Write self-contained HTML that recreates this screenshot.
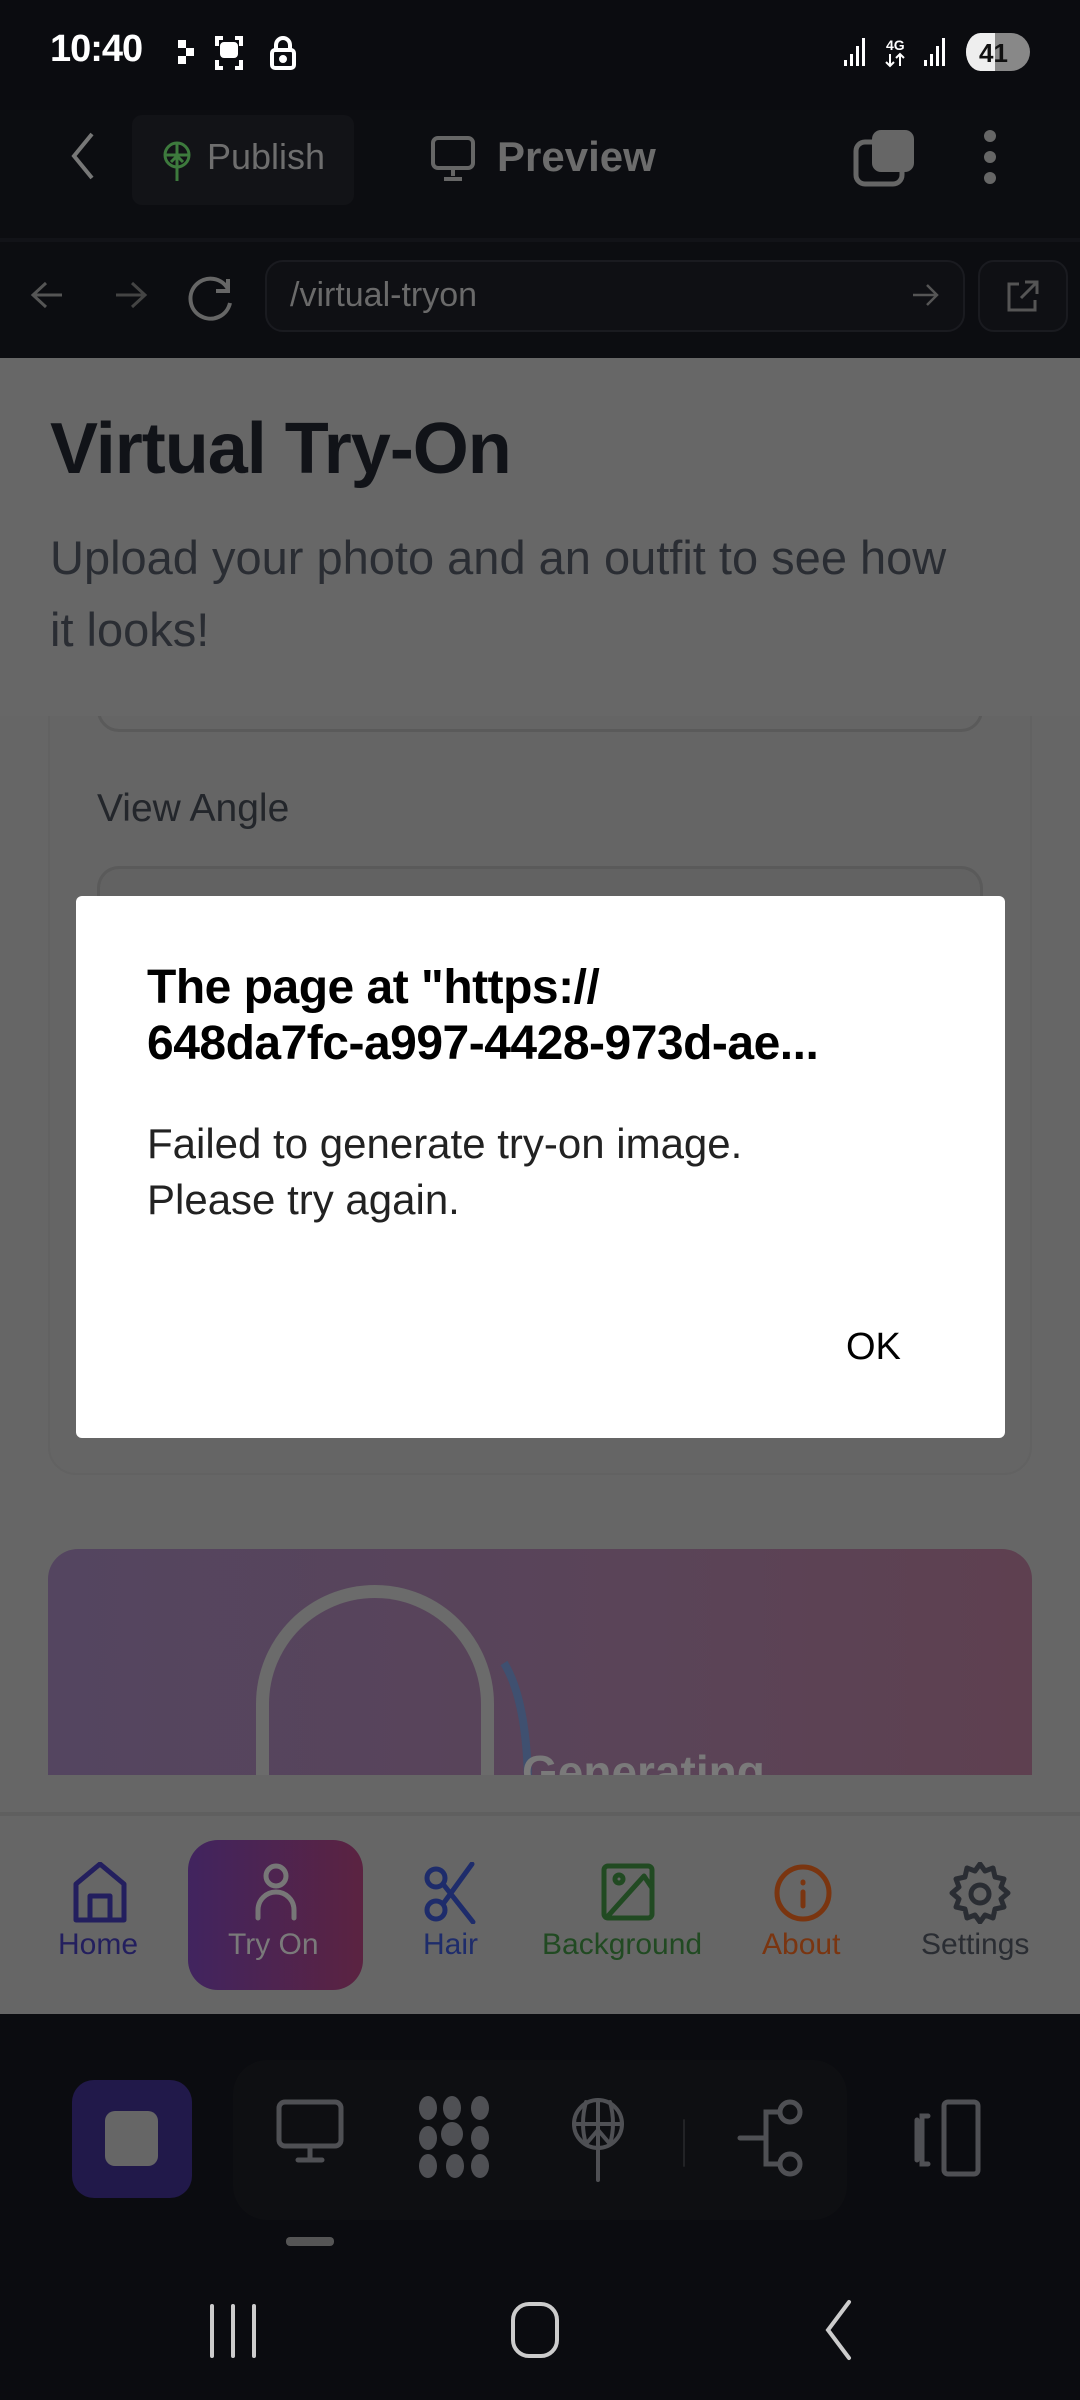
<!DOCTYPE html>
<html><head><meta charset="utf-8"><style>
*{margin:0;padding:0;box-sizing:border-box}
body{width:1080px;height:2400px;overflow:hidden;background:#0b0c10;font-family:"Liberation Sans",sans-serif;position:relative}
.a{position:absolute}
</style></head><body>
<!-- status bar -->
<div class="a" style="left:50px;top:28px;color:#fff;font-size:38px;font-weight:bold;letter-spacing:-1px">10:40</div>
<svg class="a" style="left:175px;top:30px" width="140" height="44" viewBox="0 0 140 44" fill="none" stroke="#fff" stroke-width="4">
<rect x="3" y="10" width="8" height="8" fill="#fff" stroke="none"/><rect x="11" y="18" width="8" height="8" fill="#fff" stroke="none"/><rect x="3" y="26" width="8" height="8" fill="#fff" stroke="none"/>
<path d="M48 8h-6v8M60 8h6v8M48 38h-6v-8M60 38h6v-8"/><rect x="47" y="14" width="14" height="12" rx="2" fill="#fff"/>
<rect x="97" y="20" width="22" height="18" rx="3"/><path d="M101 20v-5a7 7 0 0 1 14 0v5"/><circle cx="108" cy="29" r="2" fill="#fff"/></svg>
<svg class="a" style="left:840px;top:30px" width="200" height="44" viewBox="0 0 200 44" fill="#fff">
<rect x="4" y="30" width="3" height="6"/><rect x="10" y="24" width="3" height="12"/><rect x="16" y="16" width="3" height="20"/><rect x="22" y="8" width="3" height="28"/>
<text x="46" y="20" font-size="14" font-weight="bold" font-family="Liberation Sans">4G</text><path d="M50 24v12M46 32l4 4 4-4M60 36v-12M56 28l4-4 4 4" stroke="#fff" stroke-width="2" fill="none"/>
<rect x="84" y="30" width="3" height="6"/><rect x="90" y="24" width="3" height="12"/><rect x="96" y="16" width="3" height="20"/><rect x="102" y="8" width="3" height="28"/>
<rect x="126" y="3" width="64" height="38" rx="19" fill="#888"/><rect x="126" y="3" width="29" height="38" rx="19" fill="#eee"/><rect x="140" y="3" width="15" height="38" fill="#eee"/>
<text x="139" y="32" font-size="26" font-weight="bold" fill="#111" font-family="Liberation Sans">41</text></svg>
<!-- toolbar -->
<div class="a" style="left:0;top:110px;width:1080px;height:128px;background:#0c0d11"></div>
<svg class="a" style="left:68px;top:130px" width="30" height="52" viewBox="0 0 30 52"><path d="M24 4L6 26l18 22" stroke="#777" stroke-width="4" fill="none"/></svg>
<div class="a" style="left:132px;top:115px;width:222px;height:90px;background:#121317;border-radius:10px"></div>
<svg class="a" style="left:160px;top:140px" width="34" height="42" viewBox="0 0 34 42" fill="none" stroke="#3d7a3d" stroke-width="3"><circle cx="17" cy="15" r="12"/><path d="M5 15h24M17 3v38M11 22l6-6 6 6"/></svg>
<div class="a" style="left:207px;top:136px;color:#6e6e6e;font-size:36px">Publish</div>
<svg class="a" style="left:430px;top:135px" width="48" height="50" viewBox="0 0 48 50" fill="none" stroke="#666" stroke-width="4"><rect x="3" y="3" width="40" height="30" rx="5"/><path d="M23 33v8M14 44h18"/></svg>
<div class="a" style="left:497px;top:133px;color:#6c6c6c;font-size:42px;font-weight:bold">Preview</div>
<svg class="a" style="left:852px;top:128px" width="66" height="60" viewBox="0 0 66 60"><rect x="4" y="14" width="46" height="42" rx="9" fill="none" stroke="#666" stroke-width="5"/><rect x="20" y="2" width="42" height="42" rx="9" fill="#666"/></svg>
<svg class="a" style="left:978px;top:128px" width="24" height="60" viewBox="0 0 24 60" fill="#666"><circle cx="12" cy="8" r="6"/><circle cx="12" cy="29" r="6"/><circle cx="12" cy="50" r="6"/></svg>
<div class="a" style="left:0;top:238px;width:1080px;height:120px;background:#0c0d11;border-top:4px solid #121318"></div>
<svg class="a" style="left:28px;top:275px" width="220" height="50" viewBox="0 0 220 50" fill="none" stroke="#555" stroke-width="3"><path d="M34 20H6M18 8L5 20l13 12"/><path d="M88 20h28M104 8l13 12-13 12" stroke="#444"/><path d="M200 14a20 20 0 1 0 2 14M200 4v12h-12" stroke="#666" stroke-width="4"/></svg>
<div class="a" style="left:265px;top:260px;width:700px;height:72px;border:2px solid #1a1b20;background:#0f1014;border-radius:18px"></div>
<div class="a" style="left:290px;top:276px;color:#6a6a6a;font-size:34px">/virtual-tryon</div>
<svg class="a" style="left:910px;top:280px" width="30" height="30" viewBox="0 0 30 30" fill="none" stroke="#555" stroke-width="2.5"><path d="M3 15h24M17 5l10 10-10 10"/></svg>
<div class="a" style="left:978px;top:260px;width:90px;height:72px;border:2px solid #1a1b20;background:#0f1014;border-radius:16px"></div>
<svg class="a" style="left:1005px;top:278px" width="36" height="36" viewBox="0 0 36 36" fill="none" stroke="#555" stroke-width="3"><path d="M14 6H4v26h26V22M20 4h12v12M32 4L16 20"/></svg>
<!-- content -->
<div class="a" style="left:0;top:358px;width:1080px;height:1656px;background:#666"></div>
<div class="a" style="left:48px;top:700px;width:984px;height:775px;background:#656565;border:2px solid #626262;border-radius:0 0 28px 28px"></div>
<div class="a" style="left:97px;top:680px;width:886px;height:52px;border:3px solid #5a5a5a;border-radius:0 0 22px 22px"></div>
<div class="a" style="left:0;top:358px;width:1080px;height:358px;background:#676767"></div>
<div class="a" style="left:50px;top:408px;color:#111318;font-size:72px;font-weight:bold;letter-spacing:-1px">Virtual Try-On</div>
<div class="a" style="left:50px;top:522px;color:#2a2d33;font-size:47px;line-height:72px;width:1020px">Upload your photo and an outfit to see how<br>it looks!</div>
<div class="a" style="left:97px;top:787px;color:#23262b;font-size:39px">View Angle</div>
<div class="a" style="left:97px;top:866px;width:886px;height:80px;border:3px solid #5a5a5a;border-bottom:none;border-radius:22px 22px 0 0;background:#626262"></div>
<!-- gen card -->
<div class="a" style="left:48px;top:1549px;width:984px;height:226px;border-radius:30px 30px 0 0;background:linear-gradient(90deg,#544560,#5a4458 60%,#5e4050);overflow:hidden">
<div class="a" style="left:208px;top:36px;width:238px;height:300px;border:13px solid #6b6b6b;border-bottom:none;border-radius:119px 119px 0 0"></div>
<svg class="a" style="left:450px;top:110px" width="60" height="120" viewBox="0 0 60 120"><path d="M6 4q22 36 24 116" stroke="#3f5070" stroke-width="8" fill="none"/></svg>
<div class="a" style="left:474px;top:196px;color:#7a7a7a;font-size:46px;font-weight:bold">Generating</div></div>
<!-- dialog -->
<div class="a" style="left:76px;top:896px;width:929px;height:542px;background:#fff;border-radius:6px"></div>
<div class="a" style="left:147px;top:960px;color:#000;font-size:48px;font-weight:bold;line-height:56px;letter-spacing:-0.5px">The page at "https://<br>648da7fc-a997-4428-973d-ae...</div>
<div class="a" style="left:147px;top:1116px;color:#222;font-size:42px;line-height:56px">Failed to generate try-on image.<br>Please try again.</div>
<div class="a" style="left:846px;top:1326px;color:#000;font-size:38px">OK</div>
<!-- nav -->
<div class="a" style="left:0;top:1812px;width:1080px;height:4px;background:#5f5f5f"></div>
<div class="a" style="left:188px;top:1840px;width:175px;height:150px;border-radius:30px;background:linear-gradient(90deg,#41245f,#5b2341)"></div>
<svg class="a" style="left:0;top:1862px" width="1080" height="62" viewBox="0 0 1080 62" fill="none" stroke-width="5" stroke-linecap="round" stroke-linejoin="round">
<path d="M76 58V22l24-20 24 20v36zM90 58V34h20v24" stroke="#231f5e"/>
<circle cx="276" cy="14" r="10" stroke="#777"/><path d="M258 56v-8a18 18 0 0 1 36 0v8" stroke="#777"/>
<circle cx="436" cy="48" r="9" stroke="#1e2c6b"/><circle cx="436" cy="16" r="9" stroke="#1e2c6b"/><path d="M443 42L472 2M443 22l30 38" stroke="#1e2c6b"/>
<rect x="604" y="4" width="48" height="52" rx="4" stroke="#214a22"/><circle cx="619" cy="17" r="4" stroke="#214a22"/><path d="M608 54l36-40 8 12" stroke="#214a22"/>
<circle cx="803" cy="31" r="26" stroke="#7a3510"/><path d="M803 20v1M803 30v14" stroke="#7a3510"/>
<path d="M980 2l5 7 8-3 2 9 9 2-3 8 7 6-7 6 3 8-9 2-2 9-8-3-5 7-5-7-8 3-2-9-9-2 3-8-7-6 7-6-3-8 9-2 2-9 8 3z" stroke="#2a2d33"/><circle cx="980" cy="32" r="9" stroke="#2a2d33"/>
</svg>
<div class="a" style="left:0;top:1928px;width:1080px;font-size:30px">
<span class="a" style="left:58px;color:#231f5e">Home</span>
<span class="a" style="left:228px;color:#7a7a7a">Try On</span>
<span class="a" style="left:423px;color:#1e2c6b">Hair</span>
<span class="a" style="left:542px;color:#214a22">Background</span>
<span class="a" style="left:762px;color:#7a3510">About</span>
<span class="a" style="left:921px;color:#2a2d33">Settings</span></div>
<!-- bottom dock -->
<div class="a" style="left:72px;top:2080px;width:120px;height:118px;background:#21194a;border-radius:22px"></div>
<div class="a" style="left:105px;top:2111px;width:53px;height:55px;background:#666;border-radius:10px"></div>
<div class="a" style="left:233px;top:2060px;width:614px;height:160px;background:#0e0f12;border-radius:34px"></div>
<svg class="a" style="left:0;top:2090px" width="1080" height="100" viewBox="0 0 1080 100" fill="none" stroke="#4f5054" stroke-width="5" stroke-linecap="round">
<rect x="279" y="12" width="62" height="44" rx="6"/><path d="M310 56v12M298 70h24"/>
<g fill="#4f5054" stroke="none"><ellipse cx="428" cy="18" rx="9" ry="12"/><ellipse cx="452" cy="18" rx="9" ry="12"/><ellipse cx="480" cy="18" rx="9" ry="12"/><ellipse cx="428" cy="48" rx="9" ry="12"/><ellipse cx="452" cy="44" rx="11" ry="12"/><ellipse cx="480" cy="48" rx="9" ry="12"/><ellipse cx="428" cy="76" rx="9" ry="12"/><ellipse cx="455" cy="76" rx="9" ry="12"/><ellipse cx="480" cy="76" rx="9" ry="12"/></g>
<circle cx="598" cy="34" r="24" stroke-width="4"/><path d="M574 34h48M598 10v80M586 54l12-14 12 14M586 12q-6 22 0 42M610 12q6 22 0 42" stroke-width="4"/>
<path d="M684 30v46" stroke="#222326" stroke-width="2"/>
<circle cx="790" cy="22" r="10"/><circle cx="790" cy="74" r="10"/><path d="M740 48h26M766 48V22h14M766 48v26h14"/>
<path d="M917 30v40M928 26h-6v48h6"/><rect x="944" y="12" width="34" height="72" rx="4"/>
</svg>
<div class="a" style="left:286px;top:2237px;width:48px;height:9px;background:#555;border-radius:4px"></div>
<!-- system nav -->
<svg class="a" style="left:0;top:2290px" width="1080" height="80" viewBox="0 0 1080 80" fill="none" stroke="#ccc" stroke-width="4" stroke-linecap="round">
<path d="M212 16v50M233 16v50M254 16v50"/>
<rect x="513" y="14" width="44" height="52" rx="16"/>
<path d="M849 12L828 40l21 28"/>
</svg>
</body></html>
